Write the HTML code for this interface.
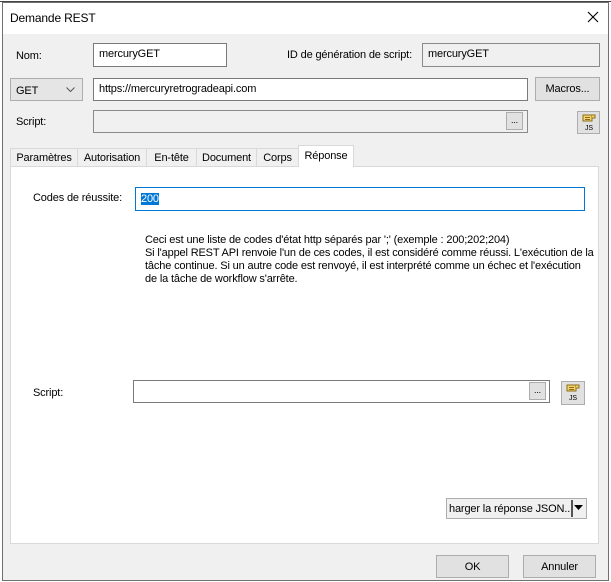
<!DOCTYPE html>
<html><head><meta charset="utf-8"><style>
*{box-sizing:border-box;margin:0;padding:0}
body{width:611px;height:582px;background:#fff;font-family:"Liberation Sans",sans-serif;font-size:11px;letter-spacing:-0.15px;color:#000;position:relative;overflow:hidden}
.a{position:absolute}
.win{left:2px;top:2px;width:607px;height:579px;border:1px solid #707070;background:#f0f0f0}
.tb{left:3px;top:3px;width:605px;height:31px;background:#fff}
.in{position:absolute;background:#fff;border:1px solid #7a7a7a;padding:4px 0 0 5px;white-space:nowrap;overflow:hidden}
.btn{position:absolute;background:#e1e1e1;border:1px solid #adadad;text-align:center;padding-top:5px}
.t{position:absolute;white-space:nowrap}
.tab{position:absolute;top:148px;height:18px;border:1px solid #d9d9d9;border-bottom:none;background:#f0f0f0;padding-top:3px;text-align:center;white-space:nowrap}
</style></head><body>
<div class="a" style="left:0;top:1px;width:611px;height:1px;background:#444"></div>
<div class="a win"></div>
<div class="a tb"></div>
<div class="t" style="left:10px;top:11px;font-size:12px">Demande REST</div>
<svg class="a" style="left:587px;top:11px" width="12" height="12"><path d="M1 1L11 11M11 1L1 11" stroke="#000" stroke-width="1.1"/></svg>

<div class="t" style="left:16px;top:50px">Nom:</div>
<div class="in" style="left:93px;top:43px;width:134px;height:24px">mercuryGET</div>
<div class="t" style="left:287px;top:49px">ID de génération de script:</div>
<div class="in" style="left:422px;top:43px;width:178px;height:24px;background:#f0f0f0;border-color:#8a8a8a">mercuryGET</div>

<div class="in" style="left:10px;top:78px;width:73px;height:23px;background:#e5e5e5;border-color:#adadad;padding-top:6px">GET</div>
<svg class="a" style="left:66px;top:87px" width="9" height="6"><path d="M0.5 0.5L4.5 4.5L8.5 0.5" stroke="#555" fill="none"/></svg>
<div class="in" style="left:93px;top:78px;width:435px;height:23px">https://mercuryretrogradeapi.com</div>
<div class="btn" style="left:535px;top:77px;width:65px;height:24px">Macros...</div>

<div class="t" style="left:16px;top:116px">Script:</div>
<div class="in" style="left:93px;top:110px;width:435px;height:23px;background:#f0f0f0;border-color:#8a8a8a"></div>
<div class="btn" style="left:506px;top:112px;width:17px;height:18px;font-size:9px;padding-top:2px">...</div>
<div class="btn" style="left:577px;top:111px;width:23px;height:23px;padding:0"><svg width="21" height="21"><path d="M5 3H14V9H5Z" fill="#f5d56b" stroke="#8a6d1a"/><path d="M14 3H17V6H14" fill="#f5d56b" stroke="#8a6d1a"/><path d="M7 5.5H12M7 7.5H12" stroke="#8a6d1a"/><text x="7" y="18" font-size="7" font-family="Liberation Sans">JS</text></svg></div>

<div class="a" style="left:10px;top:166px;width:589px;height:378px;background:#fff;border:1px solid #d9d9d9"></div>
<div class="tab" style="left:10px;width:68px">Paramètres</div>
<div class="tab" style="left:77px;width:70px">Autorisation</div>
<div class="tab" style="left:146px;width:51px">En-tête</div>
<div class="tab" style="left:196px;width:61px">Document</div>
<div class="tab" style="left:256px;width:43px">Corps</div>
<div class="tab" style="left:298px;top:145px;height:22px;width:56px;background:#fff;padding-top:4px;border-color:#d9d9d9">Réponse</div>

<div class="t" style="left:33px;top:192px">Codes de réussite:</div>
<div class="in" style="left:135px;top:187px;width:450px;height:24px;border-color:#0078d7;padding-top:5px"><span style="background:#0078d7;color:#fff">200</span></div>
<div class="t" style="left:145px;top:234px;line-height:13px">Ceci est une liste de codes d'état http séparés par ';' (exemple : 200;202;204)<br>Si l'appel REST API renvoie l'un de ces codes, il est considéré comme réussi. L'exécution de la<br>tâche continue. Si un autre code est renvoyé, il est interprété comme un échec et l'exécution<br>de la tâche de workflow s'arrête.</div>

<div class="t" style="left:33px;top:387px">Script:</div>
<div class="in" style="left:133px;top:380px;width:417px;height:23px"></div>
<div class="btn" style="left:529px;top:382px;width:17px;height:18px;font-size:9px;padding-top:2px">...</div>
<div class="btn" style="left:561px;top:381px;width:24px;height:24px;padding:0"><svg width="22" height="22"><path d="M5 3H14V9H5Z" fill="#f5d56b" stroke="#8a6d1a"/><path d="M14 3H17V6H14" fill="#f5d56b" stroke="#8a6d1a"/><path d="M7 5.5H12M7 7.5H12" stroke="#8a6d1a"/><text x="7" y="18" font-size="7" font-family="Liberation Sans">JS</text></svg></div>

<div class="in" style="left:446px;top:498px;width:141px;height:21px;background:#f0f0f0;border-color:#adadad;padding:4px 0 0 2px">harger la réponse JSON..</div>
<div class="a" style="left:571px;top:500px;width:2px;height:17px;background:#555"></div>
<div class="a" style="left:573px;top:499px;width:13px;height:19px;background:#f0f0f0"></div>
<svg class="a" style="left:574px;top:505px" width="10" height="6"><path d="M0 0H9L4.5 5Z" fill="#000"/></svg>

<div class="btn" style="left:436px;top:555px;width:73px;height:23px">OK</div>
<div class="btn" style="left:523px;top:555px;width:73px;height:23px">Annuler</div>
</body></html>
